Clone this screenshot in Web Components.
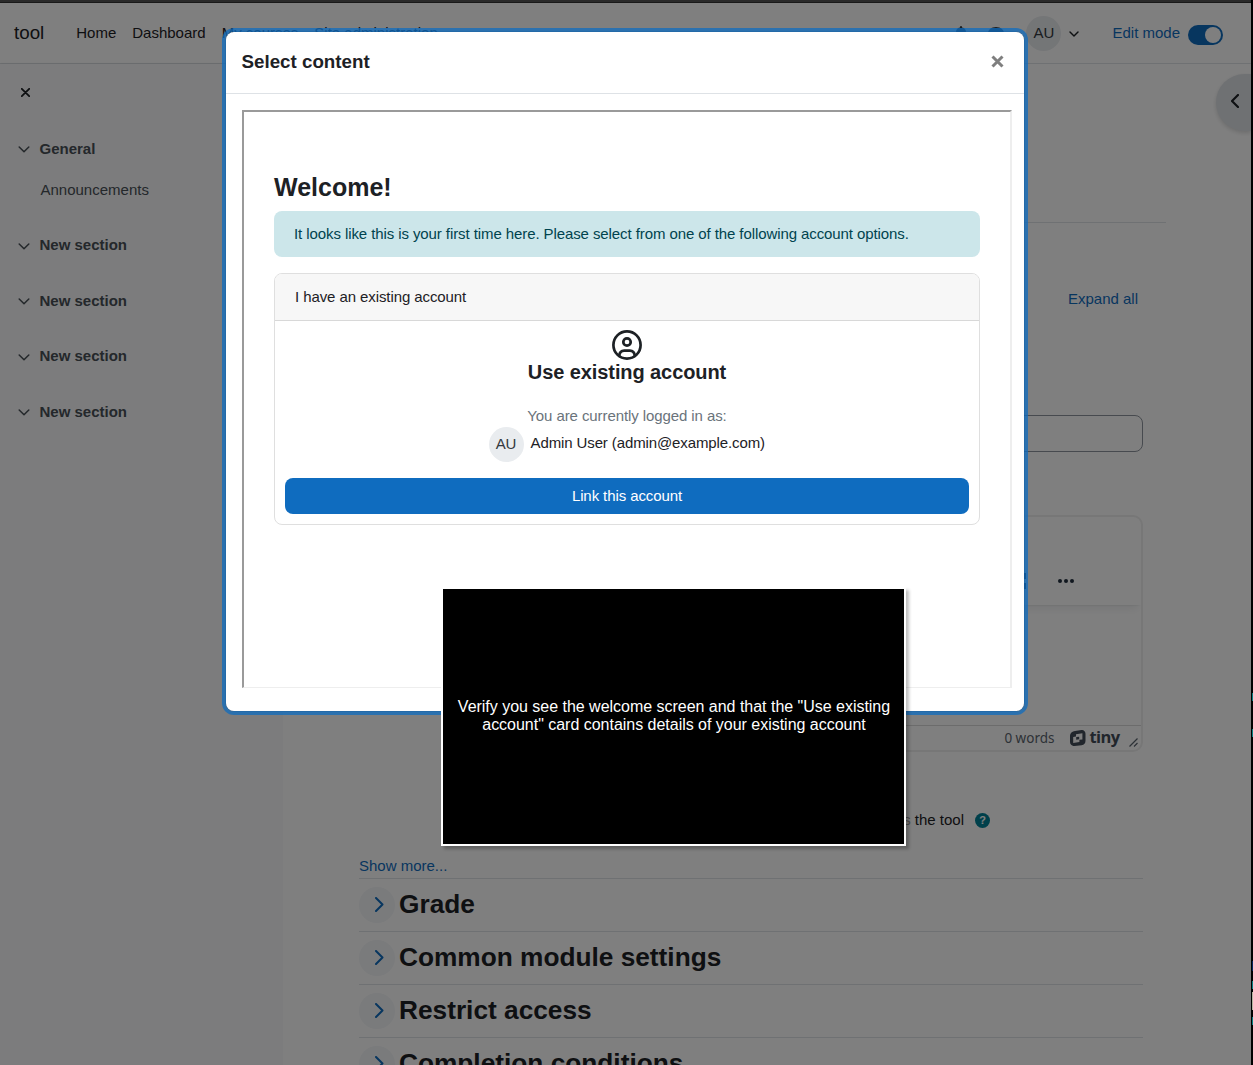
<!DOCTYPE html>
<html lang="en">
<head>
<meta charset="utf-8">
<title>tool</title>
<style>
  * { box-sizing: border-box; }
  body {
    margin: 0;
    height: 1065px;
    overflow: hidden;
    background: #000;
    color: #1d2125;
    font: 15px/22.5px "Liberation Sans", Arial, sans-serif;
  }
</style>
</head>
<body>
<moodle-page></moodle-page>

<script>
const chevron = (dir) => {
  const paths = { down: 'M1.200 1l4.800 4.800L10.800 1', right: 'M1 1l6.500 6.500L1 14', left: 'M7 1L1 7l6 6' };
  const sizes = { down: [12, 7], right: [9, 15], left: [8, 14] };
  const [w, h] = sizes[dir];
  return `<svg width="${w}" height="${h}" viewBox="0 0 ${w} ${h}" fill="none" stroke="currentColor" stroke-linecap="round" stroke-linejoin="round"><path d="${paths[dir]}" style="stroke-width: var(--stroke, 1.5)"/></svg>`;
}

// small helper so every component sets its shadow root the same way
class BaseElement extends HTMLElement {
  constructor() {
    super();
    this.attachShadow({ mode: 'open' });
  }
  connectedCallback() {
    this.shadowRoot.innerHTML = `<style>* { box-sizing: border-box; } svg { display: block; } ${this.css()}</style>${this.html()}`;
  }
  css() { return ''; }
  html() { return '<slot></slot>'; }
}

class UserAvatar extends BaseElement {
  css() {
    return `
      :host {
        display: flex; align-items: center; justify-content: center; flex: none;
        width: 35px; height: 35px; border-radius: 50%;
        background: #e9ecef; color: #343a40;
      }`;
  }
}

class NavBar extends BaseElement {
  css() {
    return `
      :host { display: flex; align-items: center; flex: none; height: 61px; border-bottom: 1px solid #dee2e6; padding: 0 28px 0 14px; background: #fff; }
      .brand { font-size: 18.75px; margin-right: 24px; }
      nav { display: flex; flex: 1; }
      nav span { padding: 0 8px; }
      .icons { display: flex; align-items: center; gap: 20px; color: #343a40; margin-right: 22px; }
      .icons svg { margin-top: 2px; }
      .user { display: flex; align-items: center; gap: 8px; --stroke: 1.7; }
      .user svg { width: 10px; height: 6px; margin-top: 1px; }
      .edit { display: flex; align-items: center; gap: 8px; margin-left: 33px; color: #0f6cbf; }
      .switch { width: 35px; height: 20px; border-radius: 10px; background: #0f6cbf; margin-top: 3px; padding: 2px; display: flex; justify-content: flex-end; }
      .switch i { width: 16px; height: 16px; border-radius: 50%; background: #fff; }`;
  }
  html() {
    return `
      <span class="brand">tool</span>
      <nav><span>Home</span><span>Dashboard</span><span>My courses</span><span>Site administration</span></nav>
      <div class="icons">
        <svg width="14" height="16" viewBox="0 0 14 16" fill="currentColor"><path d="M7 0a1 1 0 0 0-1 1v.6A4.9 4.9 0 0 0 2 6.400c0 3-1 4.600-2 5.600h14c-1-1-2-2.600-2-5.600a4.900 4.900 0 0 0-4-4.800V1a1 1 0 0 0-1-1zM5 13a2 2 0 0 0 4 0z"/></svg>
        <svg width="16" height="14" viewBox="0 0 16 14" fill="currentColor"><path d="M8 0C3.500 0 0 2.800 0 6.300c0 1.500.6 2.900 1.700 4L0 14l4.500-2c1 .4 2.200.7 3.500.7 4.500 0 8-2.900 8-6.400S12.500 0 8 0z"/></svg>
      </div>
      <div class="user"><user-avatar>AU</user-avatar>${chevron('down')}</div>
      <div class="edit">Edit mode <span class="switch"><i></i></span></div>`;
  }
}

class IndexSection extends BaseElement {
  css() {
    return `
      :host { display: block; color: #495057; padding-bottom: 33.1px; }
      .title { display: flex; align-items: center; gap: 9.5px; font-weight: bold; }
      .title svg { margin-top: 1.5px; }
      ::slotted(p) { margin: 18.500px 0 0 22.5px; }`;
  }
  html() {
    return `<div class="title">${chevron('down')}${this.getAttribute('name')}</div><slot></slot>`;
  }
}

class CourseIndex extends BaseElement {
  css() {
    return `
      :host { display: block; width: 283px; flex: none; background: #f8f9fa; padding: 24px 18px; box-shadow: 0 0 2px rgba(0,0,0,.12); }
      .close { margin: 0 0 40.6px 3px; }`;
  }
  html() {
    return `
      <svg class="close" width="9" height="9" viewBox="0 0 9 9" stroke="#1d2125" stroke-width="1.800" stroke-linecap="round"><path d="M.8.800l7.400 7.400M8.200.800L.8 8.200"/></svg>
      <index-section name="General"><p>Announcements</p></index-section>
      <index-section name="New section"></index-section>
      <index-section name="New section"></index-section>
      <index-section name="New section"></index-section>
      <index-section name="New section"></index-section>`;
  }
}

class TinyEditor extends BaseElement {
  css() {
    return `
      :host { display: flex; flex-direction: column; height: 237px; border: 2px solid #eee; border-radius: 10px; overflow: hidden; }
      .toolbar { display: flex; justify-content: flex-end; align-items: center; gap: 31px; height: 88px; padding: 40px 67px 0 0; box-shadow: 0 2px 2px -2px rgba(34,47,62,.15), 0 8px 8px -4px rgba(34,47,62,.08); }
      .area { flex: 1; }
      .status { display: flex; align-items: center; justify-content: flex-end; height: 25px; border-top: 1px solid #d9d9d9; padding-right: 3.5px; color: #5b646e; font: 13.5px/18px "Noto Sans", sans-serif; }
      .brand { display: flex; align-items: center; gap: 3px; margin: 0 9px 0 16px; color: #434c58; }
      .brand b { font: 700 16.500px/18px "Open Sans", "Noto Sans", sans-serif; letter-spacing: -.6px; position: relative; top: -1px; }
      .grip { align-self: flex-end; margin-bottom: 3px; }`;
  }
  html() {
    return `
      <div class="toolbar">
        <svg width="18" height="16" viewBox="0 0 18 16" fill="#222f3e"><path d="M0 0h17v6H0zM0 10h17v6H0z"/></svg>
        <svg width="16" height="4" viewBox="0 0 16 4" fill="#222f3e"><circle cx="2" cy="2" r="2"/><circle cx="8" cy="2" r="2"/><circle cx="14" cy="2" r="2"/></svg>
      </div>
      <div class="area"></div>
      <div class="status">
        <span class="words">0 words</span>
        <span class="brand">
          <svg width="16" height="16" viewBox="0 0 16 16" fill="currentColor"><path fill-rule="evenodd" d="M5 .900L11.500 0A3.700 3.700 0 0 1 15.500 3.700v7a4.500 4.500 0 0 1-3.900 4.500l-7 .8A4 4 0 0 1 0 12V6A5 5 0 0 1 5 .900zM6 4.300V6.600l-2.800.4v6l6.200-.9V9.800l3-.4V3.300z"/><path d="M6.200 7.100l3-.4v2.600l-3 .4z"/></svg>
          <b>tiny</b>
        </span>
        <svg class="grip" width="9" height="9" viewBox="0 0 9 9" stroke="#5b646e" stroke-width="1.200"><path d="M.5 8.500l8-8M5 8.500L8.500 5"/></svg>
      </div>`;
  }
}

class FormSection extends BaseElement {
  css() {
    return `
      :host { display: flex; align-items: center; gap: 4px; height: 53px; border-top: 1px solid #dee2e6; --stroke: 2; }
      .toggle { display: flex; align-items: center; justify-content: center; width: 36px; height: 36px; border-radius: 50%; background: #f4f6f9; color: #0f6cbf; padding: 0 0 1px 4px; }
      h3 { margin: 0; font-size: 26.250px; line-height: 32px; position: relative; top: -1px; }`;
  }
  html() {
    return `<span class="toggle">${chevron('right')}</span><h3><slot></slot></h3>`;
  }
}

class ToolForm extends BaseElement {
  css() {
    return `
      :host { flex: 1; display: block; padding: 158px 85px 0 76px; background: #fff; }
      hr { margin: 0; border: 0; border-top: 1px solid #dee2e6; }
      .fields { padding-right: 23px; }
      .link { color: #0f6cbf; }
      .expand { margin: 65px 5px 104.5px 0; text-align: right; }
      .input, tiny-editor { margin-left: 200px; }
      .input { height: 37px; border: 1px solid #8f959e; border-radius: 8px; margin-bottom: 63px; }
      .check { display: flex; align-items: center; justify-content: flex-end; gap: 11px; margin: 57px 153px 23.500px 0; }
      .faded { opacity: .45; }
      .help { display: flex; align-items: center; justify-content: center; width: 15px; height: 15px; border-radius: 50%; background: #008196; color: #fff; font: bold 11px/15px "Liberation Sans", sans-serif; }
      .more { height: 22.500px; }`;
  }
  html() {
    return `
      <hr>
      <div class="fields">
        <div class="link expand">Expand all</div>
        <div class="input"></div>
        <tiny-editor></tiny-editor>
        <div class="check"><span><span class="faded">s</span> the tool</span><span class="help">?</span></div>
        <div class="link more">Show more...</div>
        <form-section>Grade</form-section>
        <form-section>Common module settings</form-section>
        <form-section>Restrict access</form-section>
        <form-section>Completion conditions</form-section>
      </div>`;
  }
}

class AccountCard extends BaseElement {
  css() {
    return `
      :host { display: block; height: 252px; border: 1px solid #dfdfdf; border-radius: 8px; overflow: hidden; }
      header { height: 47px; padding: 12px 20px; background: #f7f7f7; border-bottom: 1px solid #d8d8d8; }
      .body { display: flex; flex-direction: column; align-items: center; padding: 9px 10px 10px; }
      h5 { margin: 0 0 21px; font-size: 20px; line-height: 24px; }
      .muted { color: #6a737b; line-height: 22px; }
      .user { display: flex; gap: 6.5px; line-height: 31px; margin-bottom: 16px; letter-spacing: -.11px; }
      .user user-avatar { padding: 0 1px 2px 0; }
      .btn { align-self: stretch; height: 36px; line-height: 36px; text-align: center; color: #fff; background: #0f6cbf; border-radius: 8px; }`;
  }
  html() {
    return `
      <header>I have an existing account</header>
      <div class="body">
        <svg width="30" height="30" viewBox="0 0 30 30" fill="none" stroke="#1d2125" stroke-width="2.700"><circle cx="15" cy="15" r="13.600"/><circle cx="15" cy="12" r="3.700"/><path d="M7.200 26c.3-3.600 2.200-5.300 5-5.300h5.600c2.800 0 4.700 1.700 5 5.300"/></svg>
        <h5>Use existing account</h5>
        <span class="muted">You are currently logged in as:</span>
        <div class="user"><user-avatar>AU</user-avatar><span>Admin User (admin@example.com)</span></div>
        <div class="btn">Link this account</div>
      </div>`;
  }
}

class ContentModal extends BaseElement {
  css() {
    return `
      :host {
        position: absolute; left: 225px; top: 31px; width: 800px; height: 681px;
        border: 1px solid rgba(0,0,0,.2); border-radius: 9px;
      }
      /* focus ring sits under the translucent border */
      :host::before { content: ''; position: absolute; inset: -1px; border: 1px solid rgba(15,108,191,.75); border-radius: 9px; box-shadow: 0 0 0 3px rgba(15,108,191,.75); z-index: -1; }
      .dialog { height: 100%; background: #fff; border-radius: 8px; padding-bottom: 23px; display: flex; flex-direction: column; }
      header { display: flex; align-items: center; justify-content: space-between; height: 62px; flex: none; padding: 0 20px 1px 15.500px; border-bottom: 1px solid #dee2e6; font-size: 18.750px; font-weight: bold; }
      header svg { margin-bottom: 1px; }
      .frame { flex: 1; margin: 16px 12px 0 16px; border: 2px solid; border-color: #9a9a9a #eee #eee #9a9a9a; border-bottom-width: 1px; padding: 60px 30px 0; letter-spacing: -.088px; }
      h2 { margin: 0 0 8px; font-size: 25px; line-height: 31px; letter-spacing: 0; }
      .alert { height: 46px; padding: 12px 20px; border-radius: 8px; background: #cce6ea; color: #00434e; margin-bottom: 16px; }`;
  }
  html() {
    return `
      <div class="dialog">
        <header><span>Select content</span>
          <svg width="13" height="13" viewBox="0 0 13 13" stroke="#7f7f7f" stroke-width="3"><path d="M1.500 1.500l10 10M11.500 1.500l-10 10"/></svg>
        </header>
        <div class="frame">
          <h2>Welcome!</h2>
          <div class="alert">It looks like this is your first time here. Please select from one of the following account options.</div>
          <account-card></account-card>
        </div>
      </div>`;
  }
}

class CaptionBox extends BaseElement {
  css() {
    return `
      :host {
        position: absolute; left: 441px; top: 587px; width: 465px; height: 259px;
        display: flex; align-items: center; justify-content: center; text-align: center;
        background: #000; border: 2px solid #fff; color: #fff; font-size: 16px; line-height: 18px;
        padding: 0 0 2px 1px; letter-spacing: -.02px;
        box-shadow: 3px 3px 3px rgba(0,0,0,.25); white-space: nowrap;
      }`;
  }
}

class MoodlePage extends BaseElement {
  css() {
    return `
      :host { display: block; position: relative; width: 1253px; height: 1065px; overflow: hidden; }
      .window { width: 1251px; height: 1065px; border-top: 3px solid #555; display: flex; flex-direction: column; background: #fff; }
      .columns { display: flex; flex: 1; min-height: 0; }
      .drawer {
        position: absolute; right: 2px; top: 74px; width: 35px; height: 57px;
        display: flex; align-items: center; padding: 0 0 3px 15px; --stroke: 2.200;
        border-radius: 29px 0 0 29px; background: #dee2e6; box-shadow: 0 2px 4px rgba(0,0,0,.15);
      }
      .backdrop { position: absolute; inset: 0 2px 0 0; background: rgba(0,0,0,.5); border-top: 2px solid rgba(0,0,0,0); box-shadow: inset 0 1px rgba(0,0,0,.4); }
      /* sliver of the window behind */
      .edge {
        position: absolute; right: 0; top: 0; width: 1px; height: 100%;
        background:
          linear-gradient(#0a7f83, #0a7f83) 0 693px / 1px 8px no-repeat,
          linear-gradient(#0a7f83, #0a7f83) 0 729px / 1px 8px no-repeat,
          linear-gradient(#06245c, #06245c) 0 961px / 1px 10px no-repeat,
          linear-gradient(#0a7f83, #0a7f83) 0 981px / 1px 8px no-repeat,
          linear-gradient(#b5b5a0, #b5b5a0) 0 992px / 1px 18px no-repeat,
          linear-gradient(#0a7f83, #0a7f83) 0 1017px / 1px 8px no-repeat;
      }
      content-modal { z-index: 1; }
      caption-box { z-index: 2; }`;
  }
  html() {
    return `
      <div class="window">
        <nav-bar></nav-bar>
        <div class="columns">
          <course-index></course-index>
          <tool-form></tool-form>
        </div>
      </div>
      <div class="drawer">${chevron('left')}</div>
      <div class="backdrop"></div>
      <div class="edge"></div>
      <content-modal></content-modal>
      <caption-box><span>Verify you see the welcome screen and that the "Use existing<br>account" card contains details of your existing account</span></caption-box>`;
  }
}

customElements.define('user-avatar', UserAvatar);
customElements.define('nav-bar', NavBar);
customElements.define('index-section', IndexSection);
customElements.define('course-index', CourseIndex);
customElements.define('tiny-editor', TinyEditor);
customElements.define('form-section', FormSection);
customElements.define('tool-form', ToolForm);
customElements.define('account-card', AccountCard);
customElements.define('content-modal', ContentModal);
customElements.define('caption-box', CaptionBox);
customElements.define('moodle-page', MoodlePage);
</script>
</body>
</html>
